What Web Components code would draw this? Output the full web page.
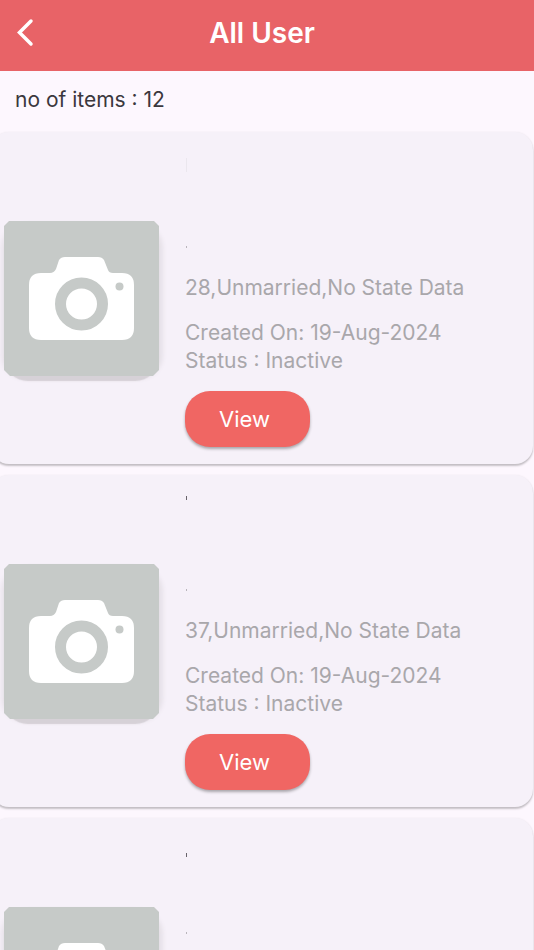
<!DOCTYPE html>
<html lang="en">
<head>
<meta charset="utf-8">
<meta name="viewport" content="width=device-width, initial-scale=1">
<title>All User</title>
<style>
  body { margin: 0; background: #fdf7fe; font-family: Inter, "Noto Sans", sans-serif; }
</style>
</head>
<body>
<user-screen>
  <app-header slot="header">All User</app-header>
  <item-count value="12"></item-count>
  <user-card age="28" name-mark="line"></user-card>
  <user-card age="37" name-mark="high"></user-card>
  <user-card name-mark="low"></user-card>
</user-screen>

<script>
  const define = (name, html, setup) => {
    const template = document.createElement('template');
    template.innerHTML = html;
    customElements.define(name, class extends HTMLElement {
      constructor() {
        super();
        this.attachShadow({ mode: 'open' }).append(template.content.cloneNode(true));
      }
      connectedCallback() { if (setup) setup(this, this.shadowRoot); }
    });
  };

  define('user-screen', `
    <style>
      :host { display: flex; flex-direction: column; height: 100vh; background: #fdf7fe; }
      main { flex: 1; min-height: 0; display: flex; flex-direction: column; gap: 11px;
             overflow: hidden auto; scrollbar-width: none; }
      ::slotted(*) { flex: none; }
    </style>
    <slot name="header"></slot>
    <main><slot></slot></main>`);

  define('app-header', `
    <style>
      :host { display: block; background: #e86367; color: #fff; }
      header { display: grid; grid-template-columns: 50px 1fr 50px; align-items: center;
               min-height: 71px; box-sizing: border-box; padding-bottom: 6px; }
      button { display: flex; padding: 10px 16px; border: 0; background: none; color: inherit; }
      svg { display: block; width: 18px; height: 30px; }
      h1 { margin: 0; padding-right: 10px; text-align: center; font-size: 28px; line-height: 32px; font-weight: 600; }
    </style>
    <header>
      <button type="button" aria-label="Back">
        <svg viewBox="0 0 18 30" fill="none" stroke="currentColor" stroke-width="3.500" stroke-linecap="round" stroke-linejoin="miter">
          <path d="M15 3 L3.500 14.500 L15 26"/>
        </svg>
      </button>
      <h1><slot></slot></h1>
    </header>`);

  define('item-count', `
    <style>
      :host { display: block; padding: 17px 15px 9px; color: #3b373d; font-size: 21px; line-height: 24px; }
      p { margin: 0; }
    </style>
    <p>no of items : <span></span></p>`,
    (host, root) => { root.querySelector('span').textContent = host.getAttribute('value'); });

  define('photo-placeholder', `
    <style>
      :host { display: block; width: 155px; height: 155px; border-radius: 24px;
              box-shadow: 0 5px 1px #d6d1d7, 4px 3px 4px #e6e1e8, -3px 3px 4px #e9e4eb; }
      svg { display: block; width: 100%; height: 100%; }
    </style>
    <svg viewBox="0 0 155 155" role="img" aria-label="No photo">
      <path fill="#c6cac8" d="M5 0H150L155 5V149L149 155H6L0 149V5Z"/>
      <path fill="#fff" d="M25 64Q25 52 37 52H46Q50 52 52 48L55 39Q57 36 61 36H94Q98 36 100 39L104 49Q105 52 109 52H118Q130 52 130 64V107Q130 119 118 119H37Q25 119 25 107Z"/>
      <circle cx="77.500" cy="83" r="21" fill="none" stroke="#c6cac8" stroke-width="11"/>
      <circle cx="115.500" cy="65.500" r="4" fill="#c6cac8"/>
    </svg>`);

  define('pill-button', `
    <style>
      :host { display: block; }
      button { min-width: 125px; height: 56px; padding: 0 24px 0 18px; border: 0; border-radius: 25px; background: #f06663; color: #fff;
               font: 400 22px/28px Inter, "Noto Sans", sans-serif;
               box-shadow: 0 2px 3px #00000050; }
    </style>
    <button type="button"><slot></slot></button>`);

  define('user-card', `
    <style>
      :host { display: block; }
      article { display: flex; align-items: center; box-sizing: border-box; min-height: 332px;
                margin: 0 1px 0 -9px; padding: 0 13px; border-radius: 18px; background: #f6f1f9;
                box-shadow: 0 2px 2px #00000038, 0 0 2px #00000010; }
      section { flex: 1; margin-left: 26px; display: flex; flex-direction: column; align-self: stretch;
                color: #a9a7ab; font-size: 21px; line-height: 28px; }
      p { margin: 0; }
      .name { height: 112px; box-sizing: border-box; padding-left: 1px; }
      .name i, .place i { display: block; width: 1px; background: #68636b; }
      .name.line { padding-top: 26px; } .name.line i { height: 14px; background: #ebe7ee; }
      .name.high { padding-top: 21px; } .name.high i { height: 4px; }
      .name.low { padding-top: 35px; } .name.low i { height: 4px; }
      .place { height: 30px; padding-left: 1px; }
      .place i { height: 2px; margin-top: 2px; background: #b9b5bb; }
      .created { margin-top: 17px; }
      pill-button { margin-top: 16px; }
    </style>
    <article>
      <photo-placeholder></photo-placeholder>
      <section>
        <div class="name"><i></i></div>
        <div class="place"><i></i></div>
        <div id="details">
          <p><span id="age"></span>,Unmarried,No State Data</p>
          <p class="created">Created On: 19-Aug-2024</p>
          <p>Status : Inactive</p>
          <pill-button>View</pill-button>
        </div>
      </section>
    </article>`,
    (host, root) => {
      root.querySelector('.name').classList.add(host.getAttribute('name-mark'));
      const age = host.getAttribute('age');
      if (age) root.querySelector('#age').textContent = age;
      else root.querySelector('#details')?.remove();
    });
</script>
</body>
</html>
